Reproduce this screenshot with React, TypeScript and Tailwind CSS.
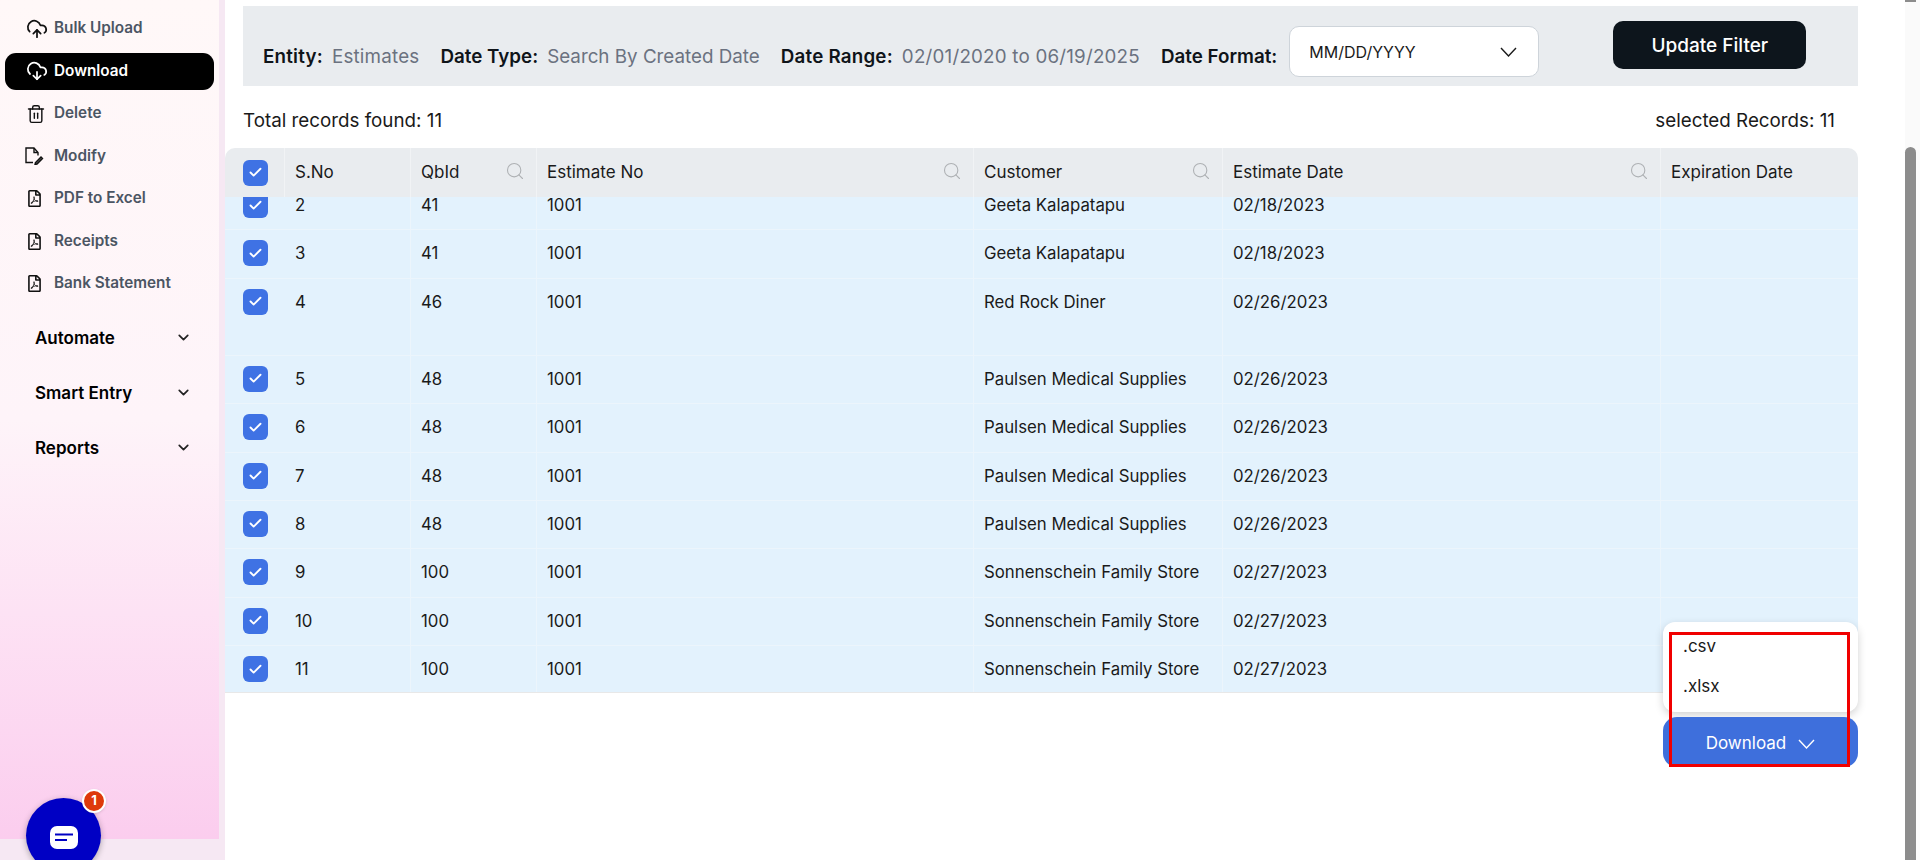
import { Check, ChevronDown, CloudDownload, CloudUpload, Search, Trash2 } from "lucide-react";
import { FaRegFilePdf } from "react-icons/fa";

function ModifyIcon() {
  return (
    <svg width="19" height="18" viewBox="0 0 19 18" fill="none" stroke="currentColor" strokeWidth="1.4" className="ml-[-1px]">
      <path d="M8 15.5H1V1h8l4 4.5v3" />
      <path d="M9 1v4.5h4" />
      <path d="M10.5 15.5 10 17.5l2-.5 5.5-5.5-1.5-1.5z" fill="#555" />
    </svg>
  );
}

function PdfIcon() {
  return <FaRegFilePdf size={17} />;
}

function UploadIcon() {
  return <CloudUpload size={22} strokeWidth={1.9} />;
}

function DownloadIcon() {
  return <CloudDownload size={22} strokeWidth={1.9} />;
}

function DeleteIcon() {
  return <Trash2 size={20} strokeWidth={1.7} />;
}

const nav = [
  { label: "Bulk Upload", Icon: UploadIcon },
  { label: "Download", Icon: DownloadIcon, active: true },
  { label: "Delete", Icon: DeleteIcon },
  { label: "Modify", Icon: ModifyIcon },
  { label: "PDF to Excel", Icon: PdfIcon },
  { label: "Receipts", Icon: PdfIcon },
  { label: "Bank Statement", Icon: PdfIcon },
];

const groups = ["Automate", "Smart Entry", "Reports"];

const columns = [
  { label: "S.No", width: "w-[126px]", search: false },
  { label: "QbId", width: "w-[126px]", search: true },
  { label: "Estimate No", width: "w-[437px]", search: true },
  { label: "Customer", width: "w-[249px]", search: true },
  { label: "Estimate Date", width: "w-[438px]", search: true },
  { label: "Expiration Date", width: "w-[197px]", search: false },
];

const rows = [
  ["2", "41", "1001", "Geeta Kalapatapu", "02/18/2023"],
  ["3", "41", "1001", "Geeta Kalapatapu", "02/18/2023"],
  ["4", "46", "1001", "Red Rock Diner", "02/26/2023"],
  ["5", "48", "1001", "Paulsen Medical Supplies", "02/26/2023"],
  ["6", "48", "1001", "Paulsen Medical Supplies", "02/26/2023"],
  ["7", "48", "1001", "Paulsen Medical Supplies", "02/26/2023"],
  ["8", "48", "1001", "Paulsen Medical Supplies", "02/26/2023"],
  ["9", "100", "1001", "Sonnenschein Family Store", "02/27/2023"],
  ["10", "100", "1001", "Sonnenschein Family Store", "02/27/2023"],
  ["11", "100", "1001", "Sonnenschein Family Store", "02/27/2023"],
];

function Box() {
  return (
    <span className="flex h-[26px] w-[25px] items-center justify-center rounded-[6px] bg-[#3f72e4]">
      <Check size={15} strokeWidth={3} className="text-white" />
    </span>
  );
}

function Vee({ className }: { className?: string }) {
  return (
    <svg width="17" height="10" viewBox="0 0 17 10" fill="none" stroke="currentColor" strokeWidth="1.4" className={className}>
      <path d="M1 1l7.5 8L16 1" />
    </svg>
  );
}

function Field({ label, value, className }: { label: string; value: string; className: string }) {
  return (
    <span className={`mt-[37px] flex whitespace-nowrap ${className}`}>
      <span className="font-semibold text-[#0f1419]">{label}</span>
      <span className="text-[#6b7280]">{value}</span>
    </span>
  );
}

export default function App() {
  return (
    <div className="relative flex h-[860px] w-[1920px] overflow-hidden bg-white font-['Inter',sans-serif] text-[18.8px] text-[#1a1a1a]">
      <aside className="flex h-full w-[225px] shrink-0 flex-col bg-[#f6e8f3]">
        <div className="h-[839px] w-[219px] bg-gradient-to-b from-[#fff8f8] via-[#fef4f9] to-[#fbcdee] pt-[10px]">
          <nav className="flex flex-col">
            {nav.map(({ label, Icon, active }) => (
              <div
                key={label}
                className={`mx-[5px] mb-[5.5px] flex h-[37px] items-center rounded-[11px] pl-[21px] ${active ? "bg-black text-white" : "text-[#111]"}`}
              >
                <span className="flex w-[28px] shrink-0 items-center justify-start">
                  <Icon />
                </span>
                <span className={`text-[15.3px] font-semibold ${active ? "text-white" : "text-[#4b5563]"}`}>{label}</span>
              </div>
            ))}
          </nav>
          <div className="mt-[17px] flex flex-col gap-[26px] pl-[35px] pr-[27px]">
            {groups.map((g) => (
              <div key={g} className="flex h-[29px] items-center justify-between">
                <span className="text-[17px] font-semibold text-black">{g}</span>
                <ChevronDown size={17} strokeWidth={2.4} className="mb-[4px] text-[#222]" />
              </div>
            ))}
          </div>
        </div>
      </aside>

      <main className="min-w-0 flex-1 pt-[6px]">
        <section className="ml-[18px] mr-[47px] flex h-[80px] bg-[#e9ecef] pl-[20px]">
          <Field label="Entity:" value="Estimates" className="mr-[21px] gap-[9px] tracking-[0.2px]" />
          <Field label="Date Type:" value="Search By Created Date" className="mr-[21px] gap-[9px]" />
          <Field label="Date Range:" value="02/01/2020 to 06/19/2025" className="mr-[21px] gap-[9px] tracking-[0.2px]" />
          <span className="mr-[12px] mt-[37px] whitespace-nowrap font-semibold text-[#0f1419]">Date Format:</span>
          <div className="mt-[20px] flex h-[51px] w-[250px] shrink-0 items-center justify-between rounded-[10px] border border-[#ced4da] bg-white pl-[19px] pr-[21px] text-[16px]">
            <span>MM/DD/YYYY</span>
            <Vee />
          </div>
          <button className="ml-[74px] mt-[15px] h-[48px] w-[193px] shrink-0 rounded-[10px] bg-[#0d151c] pt-[2px] text-[19px] font-medium text-white">
            Update Filter
          </button>
        </section>

        <div className="ml-[18px] mr-[70px] mt-[23px] flex h-[24px] items-center justify-between">
          <span>Total records found: 11</span>
          <span>selected Records: 11</span>
        </div>

        <section className="mr-[47px] mt-[15px]">
          <div className="flex h-[49px] rounded-t-[10px] bg-[#e9ecef] text-[17px]">
            <div className="flex w-[60px] shrink-0 items-center border-r border-[#f1f3f5] pl-[18px]">
              <Box />
            </div>
            {columns.map((c) => (
              <div key={c.label} className={`flex items-center justify-between border-r border-[#f1f3f5] pl-[10px] pr-[11px] last:border-r-0 ${c.width}`}>
                <span>{c.label}</span>
                {c.search && <Search size={20} strokeWidth={1.3} className="mb-[3px] text-[#aeb1b4]" />}
              </div>
            ))}
          </div>
          <div className="h-[496px] overflow-hidden border-b border-[#e8e8e8] bg-[#e3f2fd]">
            <div className="mt-[-15px] text-[16.8px]">
              {rows.map((r) => (
                <div key={r[0]} className={`flex items-start border-b border-[#ecf5fc] ${r[0] === "4" ? "h-[77px]" : "h-[48.4px]"}`}>
                  <div className="flex h-[46px] w-[60px] shrink-0 items-center pl-[18px]">
                    <Box />
                  </div>
                  {columns.map((c, i) => (
                    <div key={c.label} className={`flex h-full items-start border-r border-[#ecf5fc] pl-[10px] pt-[11px] last:border-r-0 ${c.width}`}>
                      {r[i]}
                    </div>
                  ))}
                </div>
              ))}
            </div>
          </div>
        </section>
      </main>

      <div className="flex h-full w-[15px] shrink-0 flex-col bg-[#fafafa]">
        <div className="h-[2px] w-[11px] bg-[#8c8c8c]" />
        <div className="mt-[145px] h-full w-[11px] rounded-t-full bg-[#8c8c8c]" />
      </div>

      <div className="absolute left-[1663px] top-[622px] w-[195px]">
        <div className="h-[90px] rounded-[12px] bg-white pl-[20px] pt-[12px] text-[17px] shadow-[0_3px_8px_rgba(0,0,0,0.18)]">
          <div className="h-[40px]">.csv</div>
          <div>.xlsx</div>
        </div>
        <button className="mt-[5px] flex h-[50px] w-full items-center justify-center gap-[12px] rounded-[14px] bg-[#3e6fdc] pt-[3px] text-[17px] text-white">
          Download
          <Vee />
        </button>
      </div>
      <div className="pointer-events-none absolute left-[1669px] top-[632px] h-[135px] w-[181px] border-[3px] border-[#f00000]" />

      <div className="absolute left-[26px] top-[798px] flex h-[75px] w-[75px] justify-center rounded-full bg-[#0000c4] pt-[28px] shadow-[0_2px_6px_rgba(0,0,0,0.3)]">
        <svg width="28" height="23" viewBox="0 0 28 23">
          <rect width="28" height="23" rx="7" fill="#fff" />
          <path d="M5 8.5h18M5 14h12" stroke="#0000c4" strokeWidth="2" />
        </svg>
      </div>
      <div className="absolute left-[82px] top-[789px] flex h-[24px] w-[24px] items-center justify-center rounded-full border-2 border-white bg-[#de3a0b] text-[13px] font-bold text-white shadow">
        1
      </div>
    </div>
  );
}
